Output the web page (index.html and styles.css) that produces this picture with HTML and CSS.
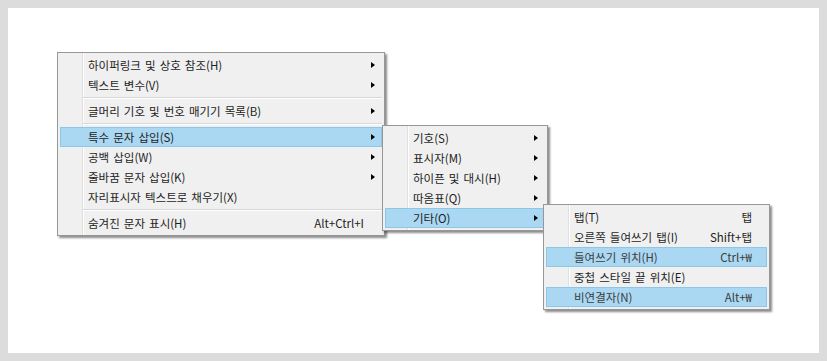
FILE: index.html
```html
<!DOCTYPE html>
<html>
<head>
    <meta charset="UTF-8">
    <title>특수 문자 삽입 메뉴</title>
    <link rel="stylesheet" href="styles.css">
</head>
<body>
    <div class="frame">
        <div class="canvas">
            <!-- main context menu -->
            <div class="menu menu-main">
                <div class="item"><span class="label">하이퍼링크 및 상호 참조(H)</span><span class="arr on"></span></div>
                <div class="item"><span class="label">텍스트 변수(V)</span><span class="arr on"></span></div>
                <div class="sep"></div>
                <div class="item"><span class="label">글머리 기호 및 번호 매기기 목록(B)</span><span class="arr on"></span></div>
                <div class="sep"></div>
                <div class="item hl"><span class="label">특수 문자 삽입(S)</span><span class="arr on"></span></div>
                <div class="item"><span class="label">공백 삽입(W)</span><span class="arr on"></span></div>
                <div class="item"><span class="label">줄바꿈 문자 삽입(K)</span><span class="arr on"></span></div>
                <div class="item"><span class="label">자리표시자 텍스트로 채우기(X)</span><span class="arr"></span></div>
                <div class="sep"></div>
                <div class="item"><span class="label">숨겨진 문자 표시(H)</span><span class="key">Alt+Ctrl+I</span><span class="arr"></span></div>
            </div>

            <!-- 특수 문자 삽입 submenu -->
            <div class="menu menu-sub">
                <div class="item"><span class="label">기호(S)</span><span class="arr on"></span></div>
                <div class="item"><span class="label">표시자(M)</span><span class="arr on"></span></div>
                <div class="item"><span class="label">하이픈 및 대시(H)</span><span class="arr on"></span></div>
                <div class="item"><span class="label">따옴표(Q)</span><span class="arr on"></span></div>
                <div class="item hl"><span class="label">기타(O)</span><span class="arr on"></span></div>
            </div>

            <!-- 기타 submenu -->
            <div class="menu menu-sub2">
                <div class="item"><span class="label">탭(T)</span><span class="key">탭</span><span class="arr"></span></div>
                <div class="item"><span class="label">오른쪽 들여쓰기 탭(I)</span><span class="key">Shift+탭</span><span class="arr"></span></div>
                <div class="item hl dim"><span class="label">들여쓰기 위치(H)</span><span class="key">Ctrl+₩</span><span class="arr"></span></div>
                <div class="item"><span class="label">중첩 스타일 끝 위치(E)</span><span class="arr"></span></div>
                <div class="item hl dim"><span class="label">비연결자(N)</span><span class="key">Alt+₩</span><span class="arr"></span></div>
            </div>
        </div>
    </div>
</body>
</html>
```

FILE: styles.css
```css
body {
    margin: 0;
    font-family: "Noto Sans CJK KR", "Noto Sans", sans-serif;
    font-size: 11.5px;
    word-spacing: 1.5px;
    color: #1e1e1e;
}
.frame {
    width: 827px;
    height: 361px;
    box-sizing: border-box;
    padding: 8px;
    background: #dcdcdc;
}
.canvas {
    position: relative;
    height: 100%;
    background: #fff;
}
.menu {
    position: absolute;
    box-sizing: border-box;
    padding: 2px;
    background-color: #f0f0f0;
    background-image: linear-gradient(to right,
        transparent 24px, #e0e0e0 24px, #e0e0e0 25px,
        #fff 25px, #fff 26px, transparent 26px);
    border: 1px solid #979797;
    box-shadow: 2px 2px 2px rgba(0, 0, 0, 0.45);
}
.menu-main {
    left: 49px;
    top: 44px;
    width: 328px;
}
.menu-sub {
    left: 374px;
    top: 117px;
    width: 166px;
}
.menu-sub2 {
    left: 535px;
    top: 196px;
    width: 227px;
}
.menu-sub2 .arr {
    width: 14px;
}
.item {
    display: flex;
    align-items: center;
    height: 20px;
    box-sizing: border-box;
    padding-left: 27px;
    border: 1px solid transparent;
    white-space: nowrap;
}
.item.hl {
    background: #aad8f3;
    border-color: #8ec6e8;
}
.item.dim {
    color: #3c3c3c;
}
.label {
    flex: 1;
}
.key {
    margin-left: 12px;
}
.arr {
    width: 17px;
    height: 100%;
    display: flex;
    align-items: center;
    justify-content: center;
}
.arr.on::before {
    content: "";
    border-left: 4px solid #000;
    border-top: 3.5px solid transparent;
    border-bottom: 3.5px solid transparent;
}
.sep {
    height: 6px;
    margin-left: 23px;
    background: linear-gradient(to bottom,
        transparent 2px, #d7d7d7 2px, #d7d7d7 3px,
        #fff 3px, #fff 4px, transparent 4px);
}
```
